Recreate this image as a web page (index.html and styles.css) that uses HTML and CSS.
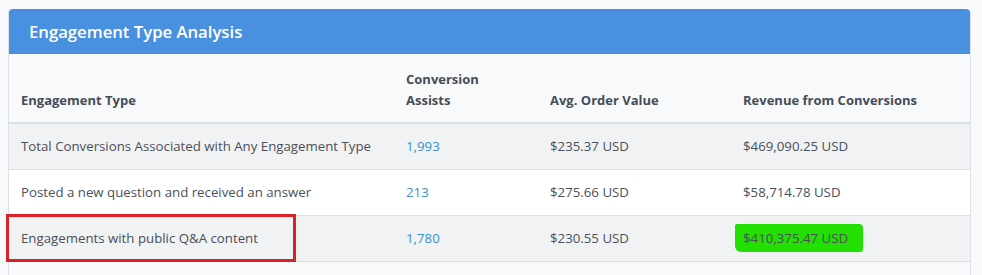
FILE: index.html
```html
<!DOCTYPE html>
<html>
<head>
<meta charset="utf-8">
<link rel="stylesheet" href="styles.css">
</head>
<body>
<div class="card">
  <div class="card-header">Engagement Type Analysis</div>
  <table class="data">
    <colgroup>
      <col class="c1"><col class="c2"><col class="c3"><col class="c4">
    </colgroup>
    <thead>
      <tr>
        <th>Engagement Type</th>
        <th>Conversion<br>Assists</th>
        <th>Avg. Order Value</th>
        <th>Revenue from Conversions</th>
      </tr>
    </thead>
    <tbody>
      <tr class="odd">
        <td>Total Conversions Associated with Any Engagement Type</td>
        <td><a class="num">1,993</a></td>
        <td>$235.37 USD</td>
        <td>$469,090.25 USD</td>
      </tr>
      <tr>
        <td>Posted a new question and received an answer</td>
        <td><a class="num">213</a></td>
        <td>$275.66 USD</td>
        <td>$58,714.78 USD</td>
      </tr>
      <tr class="odd">
        <td class="marked">Engagements with public Q&amp;A content<span class="redbox"></span></td>
        <td><a class="num">1,780</a></td>
        <td>$230.55 USD</td>
        <td><span class="hl">$410,375.47 USD</span></td>
      </tr>
    </tbody>
  </table>
  <div class="card-foot"></div>
</div>
</body>
</html>
```
FILE: styles.css
```css
html, body {
  margin: 0;
  padding: 0;
  background: #f7f9fb;
  font-family: "Open Sans", "Noto Sans", sans-serif;
}
body {
  padding: 9px 11px 0 8px;
}
.card {
  border: 1px solid #dde2e8;
  border-top: none;
  border-radius: 4px 4px 0 0;
  background: #f8f9fb;
}
.card-header {
  background: #4a90e0;
  color: #ffffff;
  font-size: 16.7px;
  font-weight: 600;
  height: 45px;
  line-height: 45px;
  padding: 0 20px;
  border-radius: 4px 4px 0 0;
}
.data {
  width: 100%;
  border-collapse: collapse;
  font-size: 13.25px;
  color: #4a5058;
}
.c1 { width: 385px; }
.c2 { width: 144px; }
.c3 { width: 193px; }
.c4 { width: auto; }
.data th {
  text-align: left;
  vertical-align: bottom;
  font-weight: 700;
  font-size: 13px;
  color: #454d58;
  padding: 15px 12px 11px;
  line-height: 21px;
  background: #f8f9fb;
  border-bottom: 2px solid #dcdfe3;
}
.data td {
  padding: 12px 12px;
  line-height: 21px;
  background: #ffffff;
  border-bottom: 1px solid #dcdfe3;
  white-space: nowrap;
}
.data tr.odd td {
  background: #f1f2f4;
}
.num {
  color: #3990cb;
  text-decoration: none;
}
.marked {
  position: relative;
}
.redbox {
  position: absolute;
  left: -3px;
  top: -2px;
  width: 284px;
  height: 42px;
  border: 3px solid #d92128;
  pointer-events: none;
}
.hl {
  background: #22e102;
  padding: 5px 15px 5px 8px;
  margin-left: -8px;
  border-radius: 2px 4px 3px 6px;
}
.card-foot {
  height: 14px;
}
```
